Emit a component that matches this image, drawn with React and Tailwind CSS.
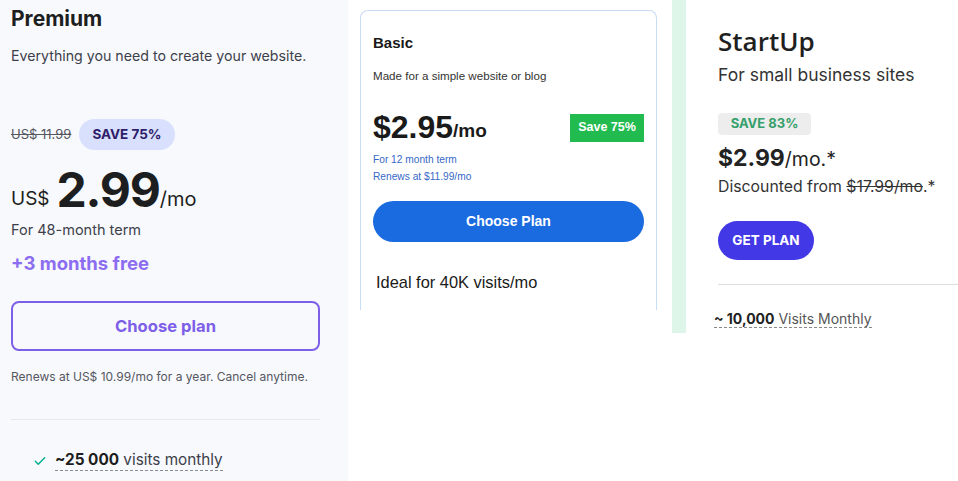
import React from "react";

const Check = () => (
    <svg width="14" height="14" viewBox="0 0 24 24" fill="none" stroke="#00b090" strokeWidth="2.5" strokeLinecap="round" strokeLinejoin="round">
        <path d="M4 12.5l5 5L20 6.5" />
    </svg>
);

const PremiumPanel = () => (
    <div className="w-[348px] h-[481px] shrink-0 bg-[#f8f9fd] px-[11px] text-[#1d1e20]" style={{ fontFamily: "Inter, 'Open Sans', sans-serif" }}>
        <h2 className="pt-[5px] text-[21px] font-bold leading-[28px]">Premium</h2>
        <p className="mt-[13px] text-[14.2px] leading-[20px] text-[#3d3f4a]">Everything you need to create your website.</p>

        <div className="mt-[53px] flex items-center gap-[8px]">
            <span className="text-[13px] text-[#55575f] line-through">US$ 11.99</span>
            <span className="h-[31px] px-[13px] flex items-center rounded-full bg-[#d8e0fd] text-[13.5px] font-bold text-[#2f1c6a]">SAVE 75%</span>
        </div>

        <div className="mt-[12px] flex items-end h-[56px]">
            <span className="text-[19px] leading-[30px] mb-[4px] mr-[7px]">US$</span>
            <span className="text-[48px] font-bold leading-[56px] tracking-tight">2.99</span>
            <span className="text-[20px] leading-[30px] mb-[4px]">/mo</span>
        </div>
        <p className="mt-[2px] text-[14.5px] leading-[20px] text-[#3d3f4a]">For 48-month term</p>
        <p className="mt-[11px] text-[18.5px] font-bold leading-[24px] text-[#8c6cf0]">+3 months free</p>

        <button className="mt-[26px] w-[309px] h-[50px] rounded-lg border-2 border-[#7d5fe8] text-[16.6px] font-bold text-[#7d5fe8]">
            Choose plan
        </button>

        <p className="mt-[18px] text-[12px] leading-[16px] text-[#55575f]">Renews at US$ 10.99/mo for a year. Cancel anytime.</p>

        <div className="mt-[34px] w-[309px] h-px bg-[#e6e8ef]" />

        <div className="mt-[30px] ml-[22px] flex items-center gap-[8px]">
            <Check />
            <span className="text-[15.3px] leading-[20px] border-b border-dashed border-[#8a8c94] text-[#3d3f4a]">
                <b className="font-bold text-[#1d1e20]">~25 000</b> visits monthly
            </span>
        </div>
    </div>
);

const BasicCard = () => (
    <div className="pt-[10px] ml-[12px] shrink-0" style={{ fontFamily: "'Liberation Sans', Arial, sans-serif" }}>
        <div className="w-[297px] h-[300px] rounded-t-lg border border-b-0 border-[#c9dcf5] bg-white px-[12px] text-[#1a1a1a]">
            <h3 className="mt-[23px] text-[15px] font-bold leading-[18px]">Basic</h3>
            <p className="mt-[17px] text-[11.6px] leading-[14px] text-[#333]">Made for a simple website or blog</p>

            <div className="mt-[26px] flex items-center justify-between">
                <div className="flex items-end">
                    <span className="text-[32px] font-bold leading-[36px]">$2.95</span>
                    <span className="text-[19px] font-semibold leading-[24px] mb-[2px]">/mo</span>
                </div>
                <span className="mt-[1px] w-[74px] h-[28px] flex items-center justify-center bg-[#21bb4f] text-white text-[12.5px] font-bold">Save 75%</span>
            </div>

            <p className="mt-[6px] text-[10.2px] leading-[17px] text-[#3768c8]">For 12 month term</p>
            <p className="text-[10.2px] leading-[17px] text-[#3768c8]">Renews at $11.99/mo</p>

            <button className="mt-[16px] w-full h-[41px] rounded-full bg-[#1b6be0] text-white text-[14px] font-bold">Choose Plan</button>

            <p className="mt-[30px] ml-[3px] text-[16.4px] leading-[20px]">Ideal for 40K visits/mo</p>
        </div>
    </div>
);

const StartUpPanel = () => (
    <div className="flex shrink-0 ml-[15px]">
        <div className="w-[14px] h-[333px] bg-[#def5ea]" />
        <div className="pl-[32px] flex-1 text-[#222]" style={{ fontFamily: "Inter, 'Open Sans', sans-serif" }}>
            <h2 className="mt-[26px] text-[26px] font-semibold leading-[30px] text-[#1f1f1f]" style={{ fontFamily: "'Open Sans', Inter, sans-serif" }}>StartUp</h2>
            <p className="mt-[7px] text-[17.5px] leading-[24px] text-[#333]">For small business sites</p>

            <span className="mt-[26px] flex h-[22px] w-[93px] items-center justify-center rounded bg-[#ededed] text-[13px] font-bold text-[#35a06c]">SAVE 83%</span>

            <div className="mt-[10px] flex items-end">
                <span className="text-[23px] font-bold leading-[26px]">$2.99</span>
                <span className="text-[19.5px] leading-[24px]">/mo.*</span>
            </div>
            <p className="mt-[6px] text-[15.8px] leading-[20px] text-[#333]">
                Discounted from <span className="line-through">$17.99/mo</span>.*
            </p>

            <button className="mt-[24px] w-[96px] h-[39px] rounded-full bg-[#4238e6] text-white text-[13.5px] font-bold">GET PLAN</button>

            <div className="mt-[24px] w-[240px] h-px bg-[#dddddd]" />

            <p className="mt-[24px] -ml-[4px] text-[14px] leading-[20px] text-[#555]">
                <span className="border-b border-dashed border-[#888]">
                    <b className="font-bold text-[#222]">~ 10,000</b> Visits Monthly
                </span>
            </p>
        </div>
    </div>
);

export default function App() {
    return (
        <div className="flex w-[958px] h-[481px] overflow-hidden bg-white">
            <PremiumPanel />
            <BasicCard />
            <StartUpPanel />
        </div>
    );
}
